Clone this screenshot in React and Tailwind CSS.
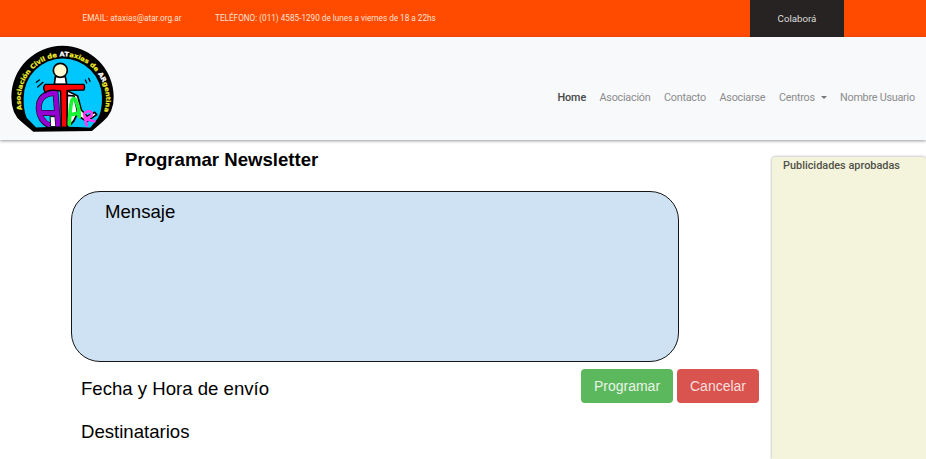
function Logo() {
  return (
    <svg className="mt-[7px] ml-[10px] h-[90px] w-[106px] shrink-0" viewBox="30 24 318 270" role="img" aria-label="ATAR">
      <defs>
        <path id="rim" d="M66 221 A128 128 0 1 1 314 221" />
      </defs>
      <path d="M100 287 L66 259 Q34 236 34 183 A153 153 0 0 1 341 183 Q342 230 308 257 L276 285 Z" fill="#000" />
      <path d="M109 275 L80 245 Q70 222 71 185 A117 117 0 0 1 306 185 Q306 225 294 246 L270 276 Z" fill="#00c8ff" />
      <text fontFamily="'DejaVu Sans', sans-serif" fontWeight="700" fontSize="19" fill="#f2ee2b" stroke="#f2ee2b" strokeWidth="0.6">
        <textPath href="#rim" textLength="472" lengthAdjust="spacingAndGlyphs">
          Asociación Civil de <tspan fill="#fff" stroke="#fff">AT</tspan>axias de <tspan fill="#fff" stroke="#fff">AR</tspan>gentina
        </textPath>
      </text>
      <path d="M166 122 L163 145 L200 145 L196 122 Z" fill="#fff" stroke="#000" strokeWidth="5" />
      <ellipse cx="181" cy="103" rx="21" ry="21" fill="#fffbd0" stroke="#000" strokeWidth="5" />
      <g fill="none" stroke="#000" strokeWidth="4" strokeLinecap="round">
        <path d="M109 139 L118 132 M113 153 L129 139 M256 132 L260 141 M266 127 L270 136" />
      </g>
      <path d="M202 164 L233 180 L244 222 L262 241 L284 229 L290 236 L260 257 L236 240 L225 200 L200 192 Z" fill="#fff" stroke="#000" strokeWidth="5" strokeLinejoin="round" />
      <path d="M202 178 L222 180 L232 225 Q226 262 200 272 Z" fill="#fff" stroke="#000" strokeWidth="5" />
      <path d="M150 242 L170 242 L172 272 L152 272 Z" fill="#fff" stroke="#000" strokeWidth="3" />
      <g fill="none" strokeLinecap="butt" strokeLinejoin="round">
        <path d="M164 171 Q116 172 116 218 Q118 254 150 270 M166 166 L175 273 M120 230 L172 232" stroke="#111" strokeWidth="18" />
        <path d="M168 171 Q116 172 116 218 Q118 254 150 268 M166 166 L175 272 M118 230 L172 232" stroke="#9400d3" strokeWidth="14" />
      </g>
      <path d="M136 145 L252 145 Q256 153 252 162 L201 163 L201 274 L184 274 L182 165 Q146 158 136 170 Q126 154 136 145 Z" fill="#f00" stroke="#000" strokeWidth="4" strokeLinejoin="round" />
      <path d="M208 265 Q209 220 216 192 Q223 182 229 197 Q238 217 238 242 M213 236 L234 232" fill="none" stroke="#18f535" strokeWidth="11" strokeLinecap="round" strokeLinejoin="round" />
      <path d="M260 268 L252 233 Q267 220 275 230 Q279 241 257 249 L283 256" fill="none" stroke="#ff38f5" strokeWidth="8" strokeLinecap="round" strokeLinejoin="round" />
      <path d="M101 279 Q187 274 275 279" fill="none" stroke="#000" strokeWidth="8" />
    </svg>
  );
}

function TopBar() {
  return (
    <div className="flex h-[37px] bg-[#ff4b00] text-[8.2px] leading-[37px] whitespace-nowrap text-[#ffe1d5]">
      <span className="ml-[82.5px] w-[132.5px]">EMAIL: ataxias@atar.org.ar</span>
      <span className="w-[535px]">TELÉFONO: (011) 4585-1290 de lunes a viernes de 18 a 22hs</span>
      <button className="w-[94px] bg-[#272322] text-center text-[9.7px] text-[#ddd]">Colaborá</button>
    </div>
  );
}

function Header() {
  return (
    <header className="relative flex h-[103px] justify-between bg-[#f8f9fb] shadow-[0_1px_3px_rgba(0,0,0,0.4)]">
      <Logo />
      <nav className="mt-[53px] flex h-4 text-[10.8px] leading-4 tracking-[-0.24px] whitespace-nowrap text-[#8b8c8d]">
        <a className="w-[42px] font-medium tracking-[-0.1px] text-[#454647]">Home</a>
        <a className="w-[64.5px]">Asociación</a>
        <a className="w-[55.5px]">Contacto</a>
        <a className="w-[59.5px]">Asociarse</a>
        <a className="flex w-[61px] items-center gap-[6px]">
          Centros
          <span className="mb-px border-x-[3px] border-t-[3px] border-x-transparent border-t-[#777]" />
        </a>
        <a className="w-[86px]">Nombre Usuario</a>
      </nav>
    </header>
  );
}

export default function App() {
  return (
    <div className="flex h-[459px] w-[926px] flex-col overflow-hidden bg-white font-['Roboto',sans-serif]">
      <TopBar />
      <Header />
      <div className="flex flex-1 justify-between">
        <main className="flex w-[759px] flex-col font-['Liberation_Sans',sans-serif] text-[18.6px] text-black">
          <h1 className="mt-2 ml-[125px] leading-6 font-bold">Programar Newsletter</h1>
          <section className="mt-[19px] ml-[71px] h-[171px] w-[608px] rounded-[29px] border border-[#151515] bg-[#cfe2f3] pt-2 pl-[33px] leading-6">
            Mensaje
          </section>
          <div className="mt-[7px] ml-[81px] flex h-[34px] justify-between">
            <span className="pt-2 leading-6">Fecha y Hora de envío</span>
            <div className="flex gap-1 text-[14px] text-[#e9f3e9]">
              <button className="w-[92px] rounded-[4px] bg-[#5cb85c]">Programar</button>
              <button className="w-[82px] rounded-[4px] bg-[#d9534f] text-[#f8dfde]">Cancelar</button>
            </div>
          </div>
          <div className="mt-[17px] ml-[81px] leading-6">Destinatarios</div>
        </main>
        <aside className="mt-[17px] w-[154px] rounded-t-[3px] bg-[#f4f4dc] pl-[11px] text-[10.9px] leading-[17px] font-medium text-[#505148] shadow-[0_0_3px_rgba(0,0,0,0.4)]">
          Publicidades aprobadas
        </aside>
      </div>
    </div>
  );
}
